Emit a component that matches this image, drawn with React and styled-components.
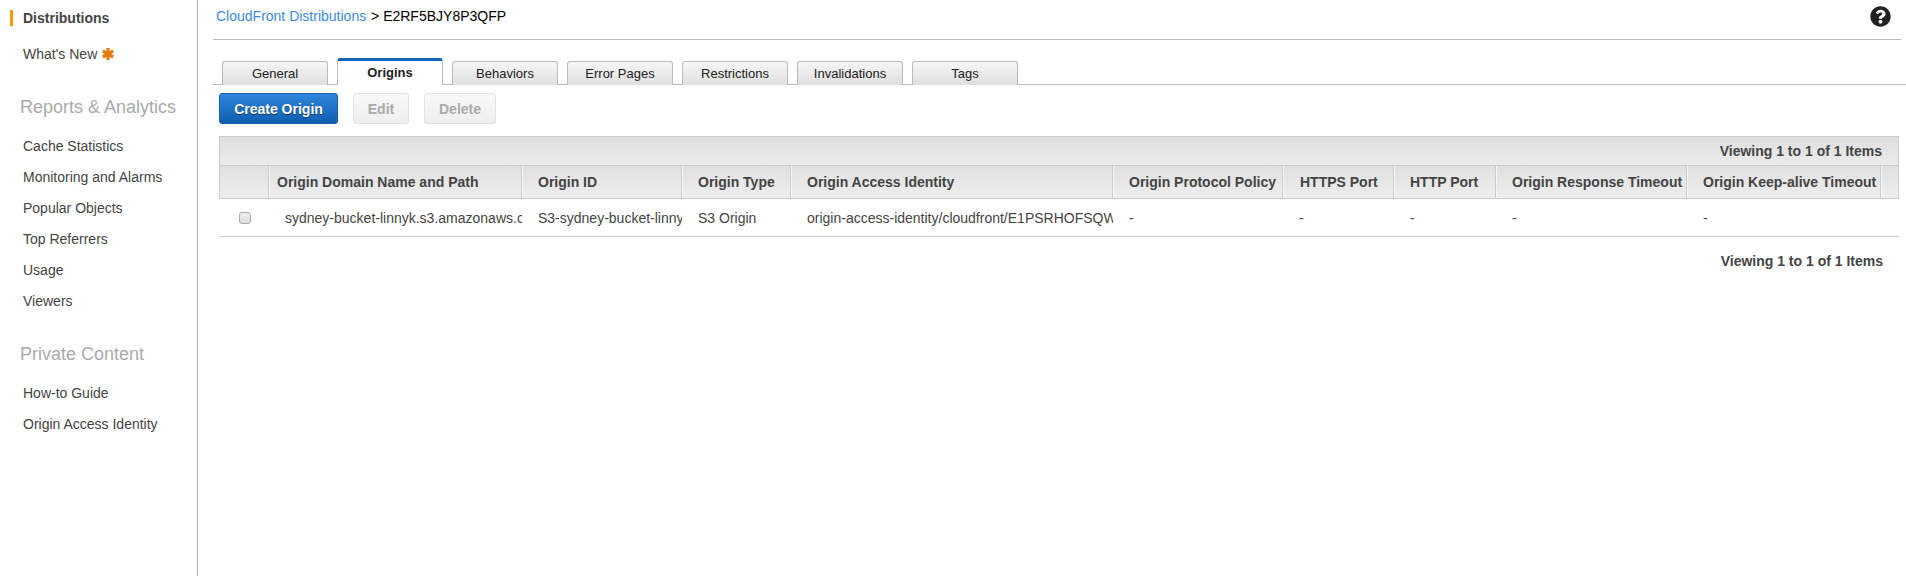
import React from "react";
import styled, { createGlobalStyle } from "styled-components";
import { FaQuestionCircle } from "react-icons/fa";

const Global = createGlobalStyle`
  html, body { margin: 0; padding: 0; background: #fff; }
  body { font-family: "Liberation Sans", Arial, sans-serif; font-size: 14px; color: #444; }
`;

const Page = styled.div`
  display: flex;
  height: 576px;
  overflow: hidden;
`;

const Sidebar = styled.nav`
  flex: 0 0 197px;
  box-sizing: content-box;
  border-right: 1px solid #b0b0b0;
  padding-top: 10px;
`;

const NavItem = styled.a`
  display: flex;
  align-items: center;
  height: 16px;
  margin: 0 0 ${p => (p.$active ? "20px" : "15px")} 10px;
  padding-left: ${p => (p.$active ? "10px" : "13px")};
  border-left: ${p => (p.$active ? "3px solid #f90" : "none")};
  font-weight: ${p => (p.$active ? "bold" : "normal")};
  line-height: 16px;
  color: #444;
  white-space: nowrap;
`;

const StarIcon = styled.svg`
  width: 12px;
  height: 12px;
  margin-left: 5px;
  stroke: #e47911;
  stroke-width: 3.2;
  fill: none;
`;

const Star = () => (
  <StarIcon viewBox="0 0 12 12">
    <path d="M6 0v12M.8 3l10.4 6M.8 9l10.4-6" />
  </StarIcon>
);

const NavHeading = styled.h3`
  margin: 34px 0 20px 20px;
  font-size: 18px;
  font-weight: normal;
  line-height: 22px;
  color: #aaa;
  white-space: nowrap;
`;

const Main = styled.main`
  flex: 1;
  min-width: 0;
  padding-left: 15px;
`;

const TopBar = styled.header`
  display: flex;
  align-items: center;
  justify-content: space-between;
  box-sizing: border-box;
  height: 40px;
  margin-right: 5px;
  padding: 0 10px 7px 3px;
  border-bottom: 1px solid #bbb;
  color: #000;
`;

const Link = styled.a`
  margin-right: 1px;
  color: #3d8ae0;
`;

const Help = styled(FaQuestionCircle)`
  width: 21px;
  height: 21px;
  color: #222;
`;

const TabBar = styled.div`
  display: flex;
  align-items: flex-end;
  gap: 9px;
  box-sizing: border-box;
  height: 45px;
  padding-left: 9px;
  border-bottom: 1px solid #bbb;
`;

const Tab = styled.div`
  box-sizing: border-box;
  width: 106px;
  height: ${p => (p.$active ? "27px" : "24px")};
  margin-bottom: -1px;
  border: 1px solid #bbb;
  border-bottom: none;
  border-top: ${p => (p.$active ? "3px solid #1166bb" : "1px solid #bbb")};
  border-radius: 3px 3px 0 0;
  background: ${p => (p.$active ? "#fff" : "linear-gradient(#f6f6f6, #dfdfdf)")};
  color: #222;
  font-size: 13px;
  font-weight: ${p => (p.$active ? "bold" : "normal")};
  line-height: 23px;
  text-align: center;
`;

const Actions = styled.div`
  display: flex;
  gap: 15px;
  margin: 8px 0 12px 6px;
`;

const Button = styled.button`
  box-sizing: border-box;
  height: 31px;
  width: ${p => p.$w}px;
  padding: 0;
  border-radius: 3px;
  font-family: inherit;
  font-size: 14px;
  font-weight: bold;
  border: 1px solid ${p => (p.$primary ? "#1a5fa8" : "#e2e2e2")};
  background: ${p => (p.$primary ? "linear-gradient(#2f86dd, #0f5eb0)" : "linear-gradient(#f8f8f8, #efefef)")};
  color: ${p => (p.$primary ? "#fff" : "#aaa")};
  text-shadow: ${p => (p.$primary ? "0 1px 1px rgba(0,0,0,.45)" : "none")};
`;

const Grid = styled.div`
  margin: 0 7px 0 6px;
`;

const Toolbar = styled.div`
  box-sizing: border-box;
  height: 29px;
  padding-right: 16px;
  border: 1px solid #ccc;
  border-bottom: none;
  background: linear-gradient(#dedede, #ececec);
  font-weight: bold;
  line-height: 29px;
  text-align: right;
  color: #444;
`;

const Table = styled.table`
  width: 1680px;
  table-layout: fixed;
  border-collapse: separate;
  border-spacing: 0;
`;

const Th = styled.th`
  box-sizing: border-box;
  height: 34px;
  padding: 0 0 0 ${p => p.$pad}px;
  border-top: 1px solid #ccc;
  border-bottom: 1px solid #ccc;
  border-right: 1px solid #ccc;
  border-left: ${p => (p.$first ? "1px solid #ccc" : "none")};
  box-shadow: ${p => (p.$first ? "none" : "inset 1px 0 0 #f7f7f7")};
  background: linear-gradient(#e0e0e0, #eeeeee);
  color: #444;
  font-size: 14px;
  font-weight: bold;
  text-align: left;
  white-space: nowrap;
  overflow: hidden;
`;

const Td = styled.td`
  box-sizing: border-box;
  height: 38px;
  padding: 0 0 0 16px;
  border-bottom: 1px solid #ccc;
  color: #444;
  white-space: nowrap;
  overflow: hidden;
`;

const CheckCell = styled(Td)`
  padding: 0 0 0 20px;
`;

const Check = styled.span`
  display: block;
  box-sizing: border-box;
  width: 12px;
  height: 12px;
  border: 1px solid #aaa;
  border-radius: 3px;
  background: linear-gradient(#eee, #dcdcdc);
`;

const Footer = styled.div`
  margin: 16px 16px 0 0;
  font-weight: bold;
  line-height: 16px;
  text-align: right;
  color: #444;
`;

const widths = [50, 253, 160, 109, 322, 170, 111, 102, 191, 194, 18];
const headers = [
  ["", 0],
  ["Origin Domain Name and Path", 8],
  ["Origin ID", 16],
  ["Origin Type", 16],
  ["Origin Access Identity", 16],
  ["Origin Protocol Policy", 16],
  ["HTTPS Port", 17],
  ["HTTP Port", 16],
  ["Origin Response Timeout", 16],
  ["Origin Keep-alive Timeout", 16],
  ["", 0],
];
const cells = [
  "sydney-bucket-linnyk.s3.amazonaws.com",
  "S3-sydney-bucket-linnyk",
  "S3 Origin",
  "origin-access-identity/cloudfront/E1PSRHOFSQWXYZ",
  "-", "-", "-", "-", "-",
];
const tabs = ["General", "Origins", "Behaviors", "Error Pages", "Restrictions", "Invalidations", "Tags"];

export default function App() {
  return (
    <Page>
      <Global />
      <Sidebar>
        <NavItem $active>Distributions</NavItem>
        <NavItem>What's New<Star /></NavItem>
        <NavHeading>Reports &amp; Analytics</NavHeading>
        {["Cache Statistics", "Monitoring and Alarms", "Popular Objects", "Top Referrers", "Usage", "Viewers"].map(t => (
          <NavItem key={t}>{t}</NavItem>
        ))}
        <NavHeading>Private Content</NavHeading>
        {["How-to Guide", "Origin Access Identity"].map(t => <NavItem key={t}>{t}</NavItem>)}
      </Sidebar>
      <Main>
        <TopBar>
          <span><Link>CloudFront Distributions</Link> &gt; E2RF5BJY8P3QFP</span>
          <Help />
        </TopBar>
        <TabBar>
          {tabs.map(t => <Tab key={t} $active={t === "Origins"}>{t}</Tab>)}
        </TabBar>
        <Actions>
          <Button $primary $w={119}>Create Origin</Button>
          <Button $w={56}>Edit</Button>
          <Button $w={72}>Delete</Button>
        </Actions>
        <Grid>
          <Toolbar>Viewing 1 to 1 of 1 Items</Toolbar>
          <Table>
            <colgroup>
              {widths.map((w, i) => <col key={i} style={{ width: w }} />)}
            </colgroup>
            <thead>
              <tr>
                {headers.map(([h, pad], i) => <Th key={i} $pad={pad} $first={i === 0}>{h}</Th>)}
              </tr>
            </thead>
            <tbody>
              <tr>
                <CheckCell><Check /></CheckCell>
                {cells.map((c, i) => <Td key={i}>{c}</Td>)}
                <Td />
              </tr>
            </tbody>
          </Table>
          <Footer>Viewing 1 to 1 of 1 Items</Footer>
        </Grid>
      </Main>
    </Page>
  );
}
